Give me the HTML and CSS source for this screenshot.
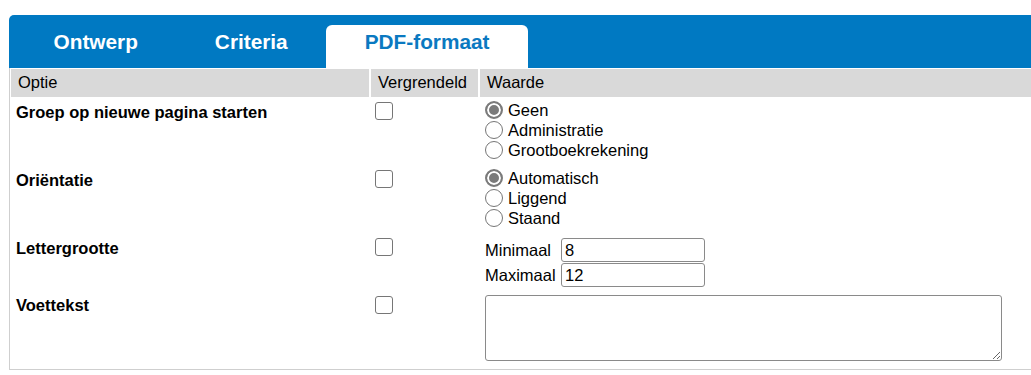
FILE: index.html
```html
<!DOCTYPE html>
<html lang="nl">
<head>
<meta charset="utf-8">
<title>PDF-formaat</title>
<link rel="stylesheet" href="styles.css">
</head>
<body>
<div class="panel">
  <div class="tabs">
    <div class="tab">Ontwerp</div>
    <div class="tab">Criteria</div>
    <div class="tab active">PDF-formaat</div>
  </div>
  <div class="grid">
    <div class="th">Optie</div>
    <div class="th">Vergrendeld</div>
    <div class="th">Waarde</div>

    <div class="td label">Groep op nieuwe pagina starten</div>
    <div class="td lock"><input type="checkbox" class="check"></div>
    <div class="td value choices">
      <label class="opt"><input type="radio" name="groep" class="radio" checked>Geen</label>
      <label class="opt"><input type="radio" name="groep" class="radio">Administratie</label>
      <label class="opt"><input type="radio" name="groep" class="radio">Grootboekrekening</label>
    </div>

    <div class="td label">Oriëntatie</div>
    <div class="td lock"><input type="checkbox" class="check"></div>
    <div class="td value choices">
      <label class="opt"><input type="radio" name="orient" class="radio" checked>Automatisch</label>
      <label class="opt"><input type="radio" name="orient" class="radio">Liggend</label>
      <label class="opt"><input type="radio" name="orient" class="radio">Staand</label>
    </div>

    <div class="td label">Lettergrootte</div>
    <div class="td lock"><input type="checkbox" class="check"></div>
    <div class="td value">
      <div class="sizes">
        <span class="size-label">Minimaal</span>
        <input type="text" class="field" value="8">
        <span class="size-label">Maximaal</span>
        <input type="text" class="field" value="12">
      </div>
    </div>

    <div class="td label">Voettekst</div>
    <div class="td lock"><input type="checkbox" class="check check-low"></div>
    <div class="td value">
      <textarea class="footer-text"></textarea>
    </div>
  </div>
</div>
</body>
</html>
```

FILE: styles.css
```css
html, body {
  margin: 0;
  padding: 0;
  background: #ffffff;
  overflow: hidden;
}

body {
  font-family: "Liberation Sans", Arial, sans-serif;
  font-size: 16.5px;
  color: #000000;
}

.panel {
  margin: 15px 0 0 9px;
}

.tabs {
  display: flex;
  align-items: flex-end;
  height: 53px;
  box-sizing: border-box;
  padding: 10px 0 0 6px;
  background: #0079c2;
  border-top-left-radius: 5px;
}

.tab {
  padding: 5px 38.5px 14px;
  font-size: 20.8px;
  font-weight: bold;
  line-height: 24px;
  color: #ffffff;
  white-space: nowrap;
}

.tab.active {
  background: #ffffff;
  color: #0a79c1;
  border-radius: 6px 6px 0 0;
}

.grid {
  display: grid;
  grid-template-columns: 358px 107px 1fr;
  column-gap: 2px;
  padding: 0 0 4px 1px;
  border-left: 1px solid #cfcfcf;
  border-bottom: 1px solid #cfcfcf;
}

.th {
  margin: 1px 0 1px;
  height: 28px;
  box-sizing: border-box;
  padding: 3px 7px 5px 7px;
  line-height: 20px;
  background: #d9d9d9;
  white-space: nowrap;
}

.td {
  padding: 4px 5px;
  line-height: 20px;
}

.label {
  font-weight: bold;
}

.lock {
  padding-left: 4px;
}

.choices {
  padding-top: 2px;
  padding-bottom: 6px;
}

.check {
  appearance: none;
  -webkit-appearance: none;
  display: block;
  width: 18px;
  height: 18px;
  margin: 0;
  box-sizing: border-box;
  border: 1px solid #767676;
  border-radius: 3px;
  background: #ffffff;
}

.check-low {
  margin-top: 1px;
}

.opt {
  display: flex;
  align-items: center;
  height: 20px;
  white-space: nowrap;
}

.radio {
  appearance: none;
  -webkit-appearance: none;
  width: 18px;
  height: 18px;
  margin: 0 5px 0 0;
  box-sizing: border-box;
  border: 1px solid #767676;
  border-radius: 50%;
  background: #ffffff;
  flex: none;
}

.radio:checked {
  border: 2px solid #7b7b7b;
  background: #7b7b7b;
  box-shadow: inset 0 0 0 2px #ffffff;
}

.sizes {
  display: grid;
  grid-template-columns: 76px 144px;
  row-gap: 1px;
  align-items: baseline;
}

.size-label {
  line-height: 20px;
  white-space: nowrap;
}

.field {
  width: 144px;
  height: 24px;
  box-sizing: border-box;
  margin: 0;
  padding: 0 3px;
  border: 1px solid #8a8a8a;
  border-radius: 3px;
  font-family: "Liberation Sans", Arial, sans-serif;
  font-size: 16.5px;
  color: #000000;
  background: #ffffff;
}

.footer-text {
  display: block;
  width: 517px;
  height: 66px;
  box-sizing: border-box;
  margin: 0;
  border: 1px solid #8a8a8a;
  border-radius: 3px;
  font-family: "Liberation Sans", Arial, sans-serif;
  font-size: 16.5px;
  background: #ffffff;
}
```
